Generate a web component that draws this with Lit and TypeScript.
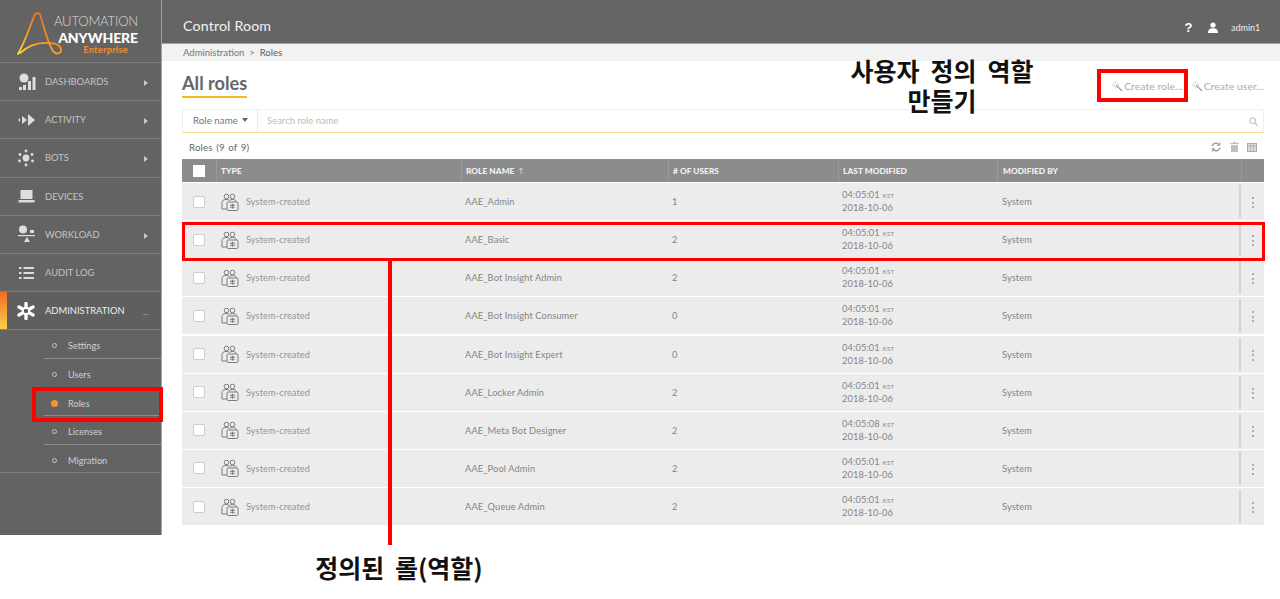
import { LitElement, html, css, svg } from "lit";
import { customElement } from "lit/decorators.js";

const rows = [
  ["AAE_Admin", "1", "04:05:01"],
  ["AAE_Basic", "2", "04:05:01"],
  ["AAE_Bot Insight Admin", "2", "04:05:01"],
  ["AAE_Bot Insight Consumer", "0", "04:05:01"],
  ["AAE_Bot Insight Expert", "0", "04:05:01"],
  ["AAE_Locker Admin", "2", "04:05:01"],
  ["AAE_Meta Bot Designer", "2", "04:05:08"],
  ["AAE_Pool Admin", "2", "04:05:01"],
  ["AAE_Queue Admin", "2", "04:05:01"],
] as const;

const navIcons: Record<string, unknown> = {
  dash: svg`<circle cx="7" cy="5" r="4.500" fill="#ddd"/><rect x="6" y="12" width="3" height="5" fill="#ddd"/><rect x="11" y="8" width="3" height="9" fill="#ddd"/><rect x="15.500" y="4" width="3" height="13" fill="#ddd"/><rect x="2" y="14" width="3" height="3" fill="#ddd"/>`,
  act: svg`<path d="M1 9l2-2v4zM5 5l5 4-5 4zM11 3l7 6-7 6z" fill="#ddd"/>`,
  bots: svg`<g fill="#ddd"><circle cx="9" cy="9" r="3.400"/><circle cx="9" cy="2" r="1.400"/><circle cx="9" cy="16" r="1.400"/><circle cx="3" cy="5.500" r="1.400"/><circle cx="15" cy="5.500" r="1.400"/><circle cx="2.500" cy="12" r="1.400"/><circle cx="15.500" cy="12" r="1.400"/></g>`,
  dev: svg`<path d="M3.500 3h12v9h-12z" fill="#ddd"/><path d="M1.500 13h16v2.500h-16z" fill="#ddd"/>`,
  work: svg`<circle cx="6" cy="4.500" r="4" fill="#ddd"/><rect x="13" y="5" width="4" height="3" fill="#ddd"/><path d="M1 10h17v1.200H1z" fill="#ddd"/><path d="M10 12l3 5H7z" fill="#ddd"/>`,
  audit: svg`<g fill="#ddd"><rect x="2" y="3" width="2.500" height="2"/><rect x="6.500" y="3" width="10.500" height="2"/><rect x="2" y="8" width="2.500" height="2"/><rect x="6.500" y="8" width="10.500" height="2"/><rect x="2" y="13" width="2.500" height="2"/><rect x="6.500" y="13" width="10.500" height="2"/></g>`,
  admin: svg`<g stroke="#fff" stroke-width="3.400" stroke-linecap="round"><path d="M9 1.500v4M9 12.500v4M2 5l3.500 2M12.500 11l3.500 2M2 13l3.500-2M12.500 7l3.500-2"/></g><circle cx="9" cy="9" r="3.200" fill="none" stroke="#fff" stroke-width="1.800"/>`,
};

const nav = [
  ["DASHBOARDS", "dash", true],
  ["ACTIVITY", "act", true],
  ["BOTS", "bots", true],
  ["DEVICES", "dev", false],
  ["WORKLOAD", "work", true],
  ["AUDIT LOG", "audit", false],
] as const;

const wand = html`<svg class="wand" viewBox="0 0 12 12" width="11" height="11"><path d="M4.500 4.500l6.500 6.500" stroke="#999" stroke-width="1.500" fill="none"/><path d="M4 .5v2M4 6v2M.5 4h2M6 4h2M1.500 1.500l1 1M6.500 1.500l-1 1M1.500 6.500l1-1" stroke="#aaa" stroke-width=".8" fill="none"/></svg>`;

const roleIcon = html`<svg class="role-ic" viewBox="0 0 18 18" width="18" height="18" fill="none" stroke="#7c7c7c" stroke-width="1"><circle cx="5.500" cy="3.500" r="2.300"/><circle cx="11.500" cy="3.500" r="2.300"/><path d="M1 16V9.500C1 7.500 2.500 6.500 5 6.500c1.500 0 2.700.3 3.200 1M8.500 7.500c.7-.7 1.800-1 3-1 2.400 0 4 1 4 3"/><path d="M1 16h5"/><rect x="6" y="9" width="11" height="8.500" rx="1.200" fill="#ececec"/><path d="M11.500 10.800v5M9.300 11.800l4.400 3M9.300 14.800l4.400-3" stroke-width="1.100"/></svg>`;

@customElement("app-root")
export class AppRoot extends LitElement {
  static styles = css`
    :host { display: block; position: relative; width: 1280px; height: 599px; overflow: hidden; background: #fff;
      font-family: Lato, "Noto Sans CJK KR", sans-serif; color: #777; }
    .app { display: flex; height: 535px; }
    .side { width: 161px; flex: none; background: #636363; display: flex; flex-direction: column; border-right: 1px solid #a5a5a5; }
    .logo { height: 62px; border-bottom: 1.500px solid #7d7d7d; display: flex; flex: none; }
    .logo svg { flex: none; margin: 10px 0 0 16px; }
    .logo-text { display: flex; flex-direction: column; align-items: flex-end; margin: 15px 0 0 -4px; width: 80px; line-height: 1; }
    .l1 { font-size: 13.100px; font-weight: 300; color: #dcdcdc; letter-spacing: -.2px; height: 15.500px; white-space: nowrap; }
    .l2 { font-size: 14px; font-weight: 900; color: #fff; height: 13px; letter-spacing: -.1px; white-space: nowrap; }
    .l3 { font-size: 9.300px; font-weight: 900; color: #e98a2b; margin-top: 1px; letter-spacing: .2px; margin-right: 10px; }
    .item { height: 37.200px; border-bottom: 1.200px solid #7d7d7d; display: flex; align-items: center; padding-left: 17px; font-size: 9.400px; color: #c4c4c4; position: relative; flex: none; }
    .item svg.ni { margin-right: 9px; flex: none; }
    .caret { position: absolute; left: 144px; top: 17px; width: 0; height: 0; border-left: 4px solid #c8c8c8; border-top: 3px solid transparent; border-bottom: 3px solid transparent; }
    .item.on { color: #eee; background: #5f5f5f; }
    .item.on::before { content: ""; position: absolute; left: 0; top: 0; bottom: 0; width: 7px; background: linear-gradient(#f26b21, #fbd14b); }
    .down { position: absolute; left: 143px; top: 22px; width: 5px; height: 1px; background: #8a8a8a; }
    .subs { height: 142px; border-bottom: 1.200px solid #7d7d7d; display: flex; flex-direction: column; flex: none; }
    .sub { height: 28.700px; margin-left: 44px; display: flex; align-items: center; font-size: 9.200px; color: #cfcfcf; border-bottom: 1.500px solid #8d8d8d; box-sizing: border-box; flex: none; padding-top: 3px; }
    .sub.last { border-bottom: 0; }
    .dot { width: 5px; height: 5px; border: 1px solid #c4c4c4; border-radius: 50%; margin: 0 11px 0 8px; box-sizing: border-box; flex: none; }
    .dot.on { background: #f6952c; border: 0; width: 7px; height: 7px; margin: 0 10px 0 7px; }
    .main { flex: 1; min-width: 0; display: flex; flex-direction: column; }
    .top { background: #656565; border-bottom: 1.500px solid #a0a0a0; display: flex; align-items: center; padding: 13px 20px 0 21px; box-sizing: border-box; height: 43.500px; color: #fff; flex: none; }
    .top .ttl { font-size: 14.200px; letter-spacing: .15px; flex: 1; color: #f2f2f2; margin-top: -5px; }
    .top .q { font-size: 13px; font-weight: 900; margin-right: 16px; font-family: "Liberation Sans", sans-serif; }
    .top svg { margin-right: 13px; }
    .top .u { font-size: 8.800px; color: #eee; }
    .crumb { height: 17.500px; background: #f2f2f2; display: flex; align-items: center; padding-left: 21px; font-size: 9.500px; color: #777; flex: none; }
    .crumb b { font-weight: 400; color: #5f5f5f; }
    .body { padding: 0 16px 0 20px; display: flex; flex-direction: column; }
    .head { height: 48px; display: flex; align-items: flex-start; justify-content: space-between; flex: none; }
    .h1 { font-size: 18.200px; font-weight: 700; color: #666; margin-top: 12px; height: 23px; line-height: 21px; border-bottom: 2px solid #f9b81f; }
    .acts { display: flex; gap: 9px; margin-top: 19px; font-size: 10.300px; color: #aaa; letter-spacing: .1px; }
    .act { display: flex; align-items: center; gap: 1px; }
    .search { height: 22px; flex: none; border: 1px solid #efefef; border-bottom: 1.500px solid #fbe08e; display: flex; align-items: center; font-size: 9.500px; }
    .rn { width: 75px; height: 100%; border-right: 1px solid #eaeaea; color: #777; padding: 0 0 2px 10px; box-sizing: border-box; display: flex; align-items: center; gap: 3px; flex: none; font-size: 9.800px; }
    .rn i { width: 0; height: 0; margin-left: 1px; border-top: 4px solid #666; border-left: 3.500px solid transparent; border-right: 3.500px solid transparent; }
    .ph { flex: 1; padding: 0 0 2px 9px; color: #bbb; }
    .search svg { margin-right: 5px; }
    .tools { height: 26px; flex: none; display: flex; align-items: center; padding: 2px 7px 0; box-sizing: border-box; font-size: 9.800px; color: #666; }
    .tools .cnt { flex: 1; word-spacing: 1px; letter-spacing: .1px; }
    .tr { display: grid; grid-template-columns: 34px 245px 207px 170px 159px 244px 23px; align-items: center; }
    .th { height: 23px; background: #8c8c8c; color: #f1f1f1; font-size: 8.300px; font-weight: 900; letter-spacing: .05px; margin-bottom: 1px; }
    .th > div { height: 100%; border-left: 1px solid #9a9a9a; padding-left: 4px; display: flex; align-items: center; box-sizing: border-box; gap: 4px; }
    .th > div:first-child { border-left: 0; padding: 0; justify-content: center; }
    .th .arr { font-size: 6.500px; font-weight: 400; }
    .cb { width: 12px; height: 12px; background: #fff; border: 1px solid #ccc; border-radius: 2px; box-sizing: border-box; }
    .th .cb { border: 0; border-radius: 0; }
    .td { height: 37px; background: #ececec; margin-bottom: 1.150px; font-size: 9.300px; color: #858585; letter-spacing: .1px; }
    .td > div { padding-left: 4px; display: flex; align-items: center; }
    .td > div:first-child { padding: 0; justify-content: center; }
    .tr > div:nth-child(6) { padding-left: 5px; }
    .td .type { gap: 7px; padding-left: 5px; }
    .td .type span { color: #949494; font-size: 9.200px; }
    .dt { line-height: 12px; display: block !important; font-size: 9.300px; }
    .dt small { font-size: 6px; margin-left: 3px; letter-spacing: .2px; }
    .more { border-left: 2px solid #d2d2d2; height: 33px; margin-left: -2px; padding: 2px 0 0 !important; box-sizing: border-box; justify-content: center; flex-direction: column; gap: 2.500px; }
    .more i { width: 2px; height: 2px; background: #999; border-radius: 50%; display: block; }
    .box { position: absolute; border: 4px solid #f00; box-sizing: border-box; pointer-events: none; }
    .b-role { left: 32px; top: 387px; width: 131px; height: 35px; }
    .b-create { left: 1097px; top: 69px; width: 91px; height: 33px; }
    .b-row { left: 182px; top: 222px; width: 1083px; height: 39px; border-width: 3.500px; }
    .vline { position: absolute; left: 388px; top: 260px; width: 4px; height: 285px; background: #f00; }
    .note { position: absolute; font-family: "Noto Sans CJK KR", sans-serif; font-weight: 700; color: #111; font-size: 25px; line-height: 30px; text-align: center; white-space: nowrap; }
    .n1 { left: 842px; top: 55px; width: 200px; word-spacing: 5.400px; }
    .n2 { left: 299px; top: 552px; width: 200px; word-spacing: 5px; }
  `;

  render() {
    return html`
      <div class="app">
        <aside class="side">
          <div class="logo">
            <svg width="46" height="46" viewBox="0 0 46 46" fill="none" stroke-linecap="round">
              <defs>
                <linearGradient id="g" x1="0" y1="1" x2=".7" y2="0"><stop offset="0" stop-color="#ffd83a"/><stop offset=".6" stop-color="#f58a1f"/><stop offset="1" stop-color="#ef6a24"/></linearGradient>
              </defs>
              <path d="M2 44C10 30 15 13 19 4.500c1-2 4-2 5 0C28 16 32 36 38 42c3 3 8 1 7-3-1-4-6-6-12-6-10-1-20 2-29 10" stroke="url(#g)" stroke-width="1.800"/>
            </svg>
            <div class="logo-text"><span class="l1">AUTOMATION</span><span class="l2">ANYWHERE</span><span class="l3">Enterprise</span></div>
          </div>
          ${nav.map(([t, ic, c]) => html`<div class="item"><svg class="ni" width="19" height="18" viewBox="0 0 19 18">${navIcons[ic]}</svg>${t}${c ? html`<span class="caret"></span>` : ""}</div>`)}
          <div class="item on"><svg class="ni" width="19" height="18" viewBox="0 0 19 18">${navIcons.admin}</svg>ADMINISTRATION<span class="down"></span></div>
          <div class="subs">
            ${["Settings", "Users", "Roles", "Licenses", "Migration"].map((s, i) => html`<div class="sub ${i === 4 ? "last" : ""}"><span class="dot ${i === 2 ? "on" : ""}"></span>${s}</div>`)}
          </div>
        </aside>
        <main class="main">
          <div class="top">
            <span class="ttl">Control Room</span>
            <span class="q">?</span>
            <svg width="10" height="11" viewBox="0 0 10 11"><circle cx="5" cy="3" r="2.600" fill="#fff"/><path d="M0 11c0-3.500 2-4.800 5-4.800s5 1.300 5 4.800z" fill="#fff"/></svg>
            <span class="u">admin1</span>
          </div>
          <div class="crumb">Administration&nbsp;&nbsp;&gt;&nbsp;&nbsp;<b>Roles</b></div>
          <div class="body">
            <div class="head">
              <span class="h1">All roles</span>
              <div class="acts">
                <span class="act">${wand}Create role...</span>
                <span class="act">${wand}Create user...</span>
              </div>
            </div>
            <div class="search">
              <div class="rn">Role name <i></i></div>
              <div class="ph">Search role name</div>
              <svg width="9" height="9" viewBox="0 0 9 9" fill="none" stroke="#c2c2c2" stroke-width="1.200"><circle cx="3.700" cy="3.700" r="2.800"/><path d="M6 6l2.500 2.500"/></svg>
            </div>
            <div class="tools">
              <span class="cnt">Roles (9 of 9)</span>
              <svg width="10" height="10" viewBox="0 0 10 10" fill="none" stroke="#999" stroke-width="1.500"><path d="M1.200 4.200A3.900 3.900 0 0 1 8 2.600M8.800 5.800A3.900 3.900 0 0 1 2 7.400"/><path d="M8.800 .5v2.800H6M1.200 9.500V6.700H4" stroke-width="1"/></svg>
              <svg class="t2" width="9" height="10" viewBox="0 0 9 10" fill="#c0c0c0" style="margin-left:9px"><path d="M3 0h3v1h3v1H0V1h3zM1 3h7v7H1z"/></svg>
              <svg class="t3" width="10" height="9" viewBox="0 0 10 9" style="margin-left:8px"><rect x=".5" y=".5" width="9" height="8" fill="#ddd" stroke="#aaa"/><path d="M3.500 1v7M6.500 1v7M1 3h8" stroke="#aaa" stroke-width=".8"/></svg>
            </div>
            <div class="tr th">
              <div><span class="cb"></span></div>
              <div>TYPE</div>
              <div>ROLE NAME <span class="arr">↑</span></div>
              <div># OF USERS</div>
              <div>LAST MODIFIED</div>
              <div>MODIFIED BY</div>
              <div></div>
            </div>
            ${rows.map((r) => html`
              <div class="tr td">
                <div><span class="cb"></span></div>
                <div class="type">${roleIcon}<span>System-created</span></div>
                <div>${r[0]}</div>
                <div>${r[1]}</div>
                <div class="dt">${r[2]}<small>KST</small><br />2018-10-06</div>
                <div>System</div>
                <div class="more"><i></i><i></i><i></i></div>
              </div>`)}
          </div>
        </main>
      </div>
      <div class="box b-role"></div>
      <div class="box b-create"></div>
      <div class="box b-row"></div>
      <div class="vline"></div>
      <div class="note n1">사용자 정의 역할<br />만들기</div>
      <div class="note n2">정의된 롤(역할)</div>
    `;
  }
}
